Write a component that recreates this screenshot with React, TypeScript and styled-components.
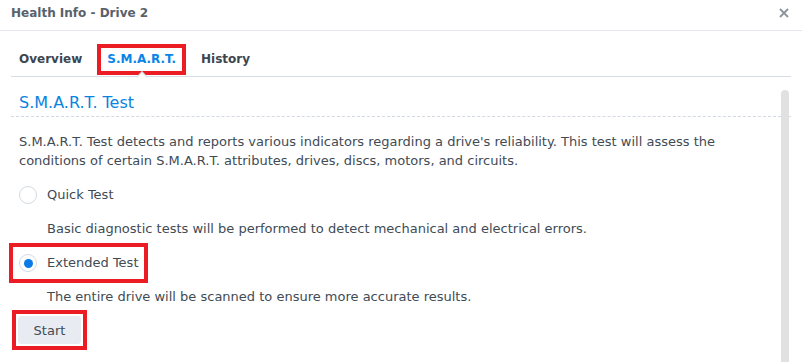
import styled, { createGlobalStyle } from 'styled-components';

const GlobalStyle = createGlobalStyle`
  html, body {
    margin: 0;
    padding: 0;
    background: #ffffff;
  }
  body {
    font-family: 'DejaVu Sans', Verdana, sans-serif;
    font-size: 13px;
    color: #414b55;
  }
`;

type TOption = {
  id: string;
  label: string;
  description: string;
  checked?: boolean;
  marked?: boolean;
};

const OPTIONS: TOption[] = [
  {
    id: 'quick',
    label: 'Quick Test',
    description:
      'Basic diagnostic tests will be performed to detect mechanical and electrical errors.',
  },
  {
    id: 'extended',
    label: 'Extended Test',
    description: 'The entire drive will be scanned to ensure more accurate results.',
    checked: true,
    marked: true,
  },
];

const TABS = ['Overview', 'S.M.A.R.T.', 'History'];

const App = () => {
  return (
    <>
      <GlobalStyle />
      <Window>
        <Header>
          <Title>Health Info - Drive 2</Title>
          <CloseButton type="button" aria-label="Close">
            <svg width="10" height="10" viewBox="0 0 10 10">
              <path d="M1 1 L9 9 M9 1 L1 9" stroke="#8d939b" strokeWidth="1.8" />
            </svg>
          </CloseButton>
        </Header>
        <TabBar>
          {TABS.map((tab) => (
            <Tab key={tab} $active={tab === 'S.M.A.R.T.'}>
              {tab}
            </Tab>
          ))}
        </TabBar>
        <Body>
          <SectionTitle>S.M.A.R.T. Test</SectionTitle>
          <Paragraph>
            S.M.A.R.T. Test detects and reports various indicators regarding a drive's
            reliability. This test will assess the conditions of certain S.M.A.R.T.
            attributes, drives, discs, motors, and circuits.
          </Paragraph>
          {OPTIONS.map((option) => (
            <Option key={option.id}>
              <RadioRow $marked={option.marked}>
                <Radio $checked={option.checked} />
                <RadioLabel>{option.label}</RadioLabel>
              </RadioRow>
              <Description>{option.description}</Description>
            </Option>
          ))}
          <Highlight>
            <StartButton type="button">Start</StartButton>
          </Highlight>
          <ScrollThumb />
        </Body>
      </Window>
    </>
  );
};

export default App;

const Window = styled.div`
  width: 802px;
  height: 362px;
  overflow: hidden;
  display: flex;
  flex-direction: column;
  background: #fff;
`;

const Header = styled.div`
  display: flex;
  align-items: center;
  justify-content: space-between;
  height: 31px;
  padding: 0 13px 5px 11px;
  box-sizing: border-box;
  border-bottom: 1px solid #e3e7ec;
  flex-shrink: 0;
`;

const Title = styled.div`
  font-weight: bold;
  font-size: 12px;
  color: #58626c;
`;

const CloseButton = styled.button`
  display: flex;
  padding: 0;
  border: 0;
  background: none;
`;

const TabBar = styled.div`
  display: flex;
  gap: 13px;
  margin: 0 11px;
  padding: 17px 0 5px 2px;
  border-bottom: 1px solid #d6dce3;
  flex-shrink: 0;
`;

const Tab = styled.div<{ $active?: boolean }>`
  position: relative;
  height: 23px;
  line-height: 23px;
  padding: 0 6px;
  font-size: 12px;
  font-weight: bold;
  color: ${({ $active }) => ($active ? '#0a84e8' : '#3d4650')};
  outline: ${({ $active }) => ($active ? '4px solid #ec1c24' : 'none')};

  &::after {
    content: '';
    display: ${({ $active }) => ($active ? 'block' : 'none')};
    position: absolute;
    left: 50%;
    bottom: -10px;
    width: 7px;
    height: 7px;
    margin-left: -4px;
    background: #fff;
    border-left: 1px solid #d6dce3;
    border-top: 1px solid #d6dce3;
    transform: rotate(45deg);
  }
`;

const Body = styled.div`
  position: relative;
  flex: 1;
  margin: 0 11px;
  display: flex;
  flex-direction: column;
  align-items: flex-start;
`;

const SectionTitle = styled.div`
  align-self: stretch;
  padding: 16px 0 3px 8px;
  font-size: 16px;
  line-height: 20px;
  color: #0a84e0;
  border-bottom: 1px dashed #d3d9e0;
`;

const Paragraph = styled.p`
  margin: 15px 0 0 8px;
  padding-right: 50px;
  line-height: 19px;
`;

const Option = styled.div`
  display: flex;
  flex-direction: column;
  align-items: flex-start;
  margin-top: 15px;

  & + & {
    margin-top: 15px;
  }
`;

const RadioRow = styled.label<{ $marked?: boolean }>`
  display: inline-flex;
  align-items: center;
  gap: 10px;
  height: 20px;
  margin-left: 8px;
  outline: ${({ $marked }) => ($marked ? '4px solid #ec1c24' : 'none')};
  outline-offset: 6px;
`;

const Radio = styled.span<{ $checked?: boolean }>`
  display: flex;
  align-items: center;
  justify-content: center;
  width: 18px;
  height: 18px;
  box-sizing: border-box;
  border: 1px solid #d3dae2;
  border-radius: 50%;
  background: #fff;

  &::after {
    content: '';
    display: ${({ $checked }) => ($checked ? 'block' : 'none')};
    width: 9px;
    height: 9px;
    border-radius: 50%;
    background: #0a7be6;
  }
`;

const RadioLabel = styled.span`
  line-height: 20px;
`;

const Description = styled.div`
  margin: 14px 0 0 36px;
  line-height: 19px;
`;

const Highlight = styled.div`
  display: flex;
  margin: 8px 0 0 5px;
  padding: 2px;
  outline: 4px solid #ec1c24;
`;

const StartButton = styled.button`
  width: 63px;
  height: 28px;
  padding: 0;
  border: 0;
  border-radius: 3px;
  background: #e8ecf2;
  font-family: inherit;
  font-size: 13px;
  color: #414b55;
`;

const ScrollThumb = styled.div`
  position: absolute;
  top: 13px;
  right: 2px;
  bottom: -20px;
  width: 8px;
  border-radius: 4px 4px 0 0;
  background: #e1e1e1;
`;
